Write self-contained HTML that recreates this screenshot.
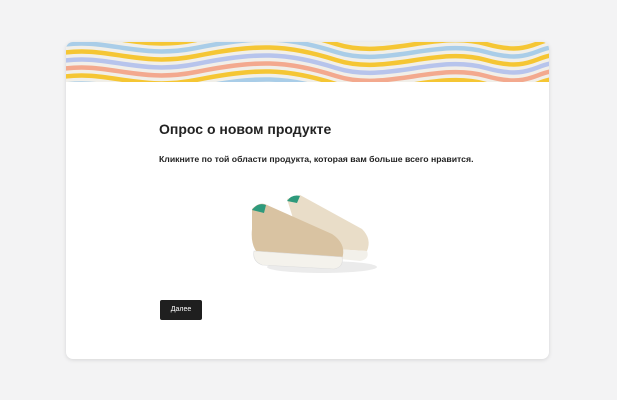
<!DOCTYPE html>
<html><head><meta charset="utf-8"><style>
body{margin:0;width:617px;height:400px;background:#f3f3f4;font-family:"Liberation Sans",sans-serif;overflow:hidden;position:relative}
.card{position:absolute;left:66px;top:42px;width:483px;height:317px;background:#fff;border-radius:7px;box-shadow:0 1px 4px rgba(0,0,0,.12);overflow:hidden}
h1{position:absolute;left:93px;top:79px;margin:0;font-size:14px;font-weight:bold;color:#222}
p{position:absolute;left:93px;top:112px;margin:0;font-size:8.7px;font-weight:bold;color:#222}
.btn{position:absolute;left:94px;top:258px;width:42px;height:20px;background:#1f1f1f;border-radius:2px;color:#fff;font-size:7px;text-align:center;line-height:20px}
</style></head><body>
<div class="card">
<svg width="483" height="40" style="position:absolute;left:0;top:0">
<rect width="483" height="40" fill="#f1efe9"/>
<g fill="none" stroke-width="4.5">
<path d="M-10 -4 C40 -14 70 10 130 -2 S220 -14 270 2 S370 -12 420 2 S470 -8 500 -2" stroke="#f5c634"/>
<path d="M-10 4 C40 -6 70 18 130 6 S220 -6 270 10 S370 -4 420 10 S470 0 500 6" stroke="#a9cde8"/>
<path d="M-10 12 C40 2 70 26 130 14 S220 2 270 18 S370 4 420 18 S470 8 500 14" stroke="#f5c634"/>
<path d="M-10 20 C40 10 70 34 130 22 S220 10 270 26 S370 12 420 26 S470 16 500 22" stroke="#b7c4ec"/>
<path d="M-10 28 C40 18 70 42 130 30 S220 18 270 34 S370 20 420 34 S470 24 500 30" stroke="#f3a98e"/>
<path d="M-10 36 C40 26 70 50 130 38 S220 26 270 42 S370 28 420 42 S470 32 500 38" stroke="#f5c634"/>
<path d="M-10 44 C40 34 70 58 130 46 S220 34 270 50 S370 36 420 50 S470 40 500 46" stroke="#a9cde8"/>
</g></svg>
<h1>Опрос о новом продукте</h1>
<p>Кликните по той области продукта, которая вам больше всего нравится.</p>
<svg width="140" height="95" style="position:absolute;left:176px;top:147px" viewBox="0 0 140 95">
<ellipse cx="80" cy="78" rx="55" ry="6" fill="#ddd" opacity=".6"/>
<path d="M45 10 L58 6 L120 40 Q130 50 125 62 L60 58 Z" fill="#e9ddc8"/>
<path d="M45 12 Q50 5 58 7 L55 14Z" fill="#2e9a7c"/>
<path d="M60 58 L125 62 Q128 70 118 72 L60 66Z" fill="#f2f0ea"/>
<path d="M10 20 Q18 12 25 16 L90 45 Q105 55 100 70 L20 68 Q8 60 10 40Z" fill="#d9c3a2"/>
<path d="M10 21 Q16 13 24 16 L22 24Z" fill="#2e9a7c"/>
<path d="M12 62 L100 68 Q102 78 92 80 L20 76 Q10 72 12 62Z" fill="#f4f2ec" stroke="#ddd" stroke-width=".6"/>
</svg>
<div class="btn">Далее</div>
</div>
</body></html>
